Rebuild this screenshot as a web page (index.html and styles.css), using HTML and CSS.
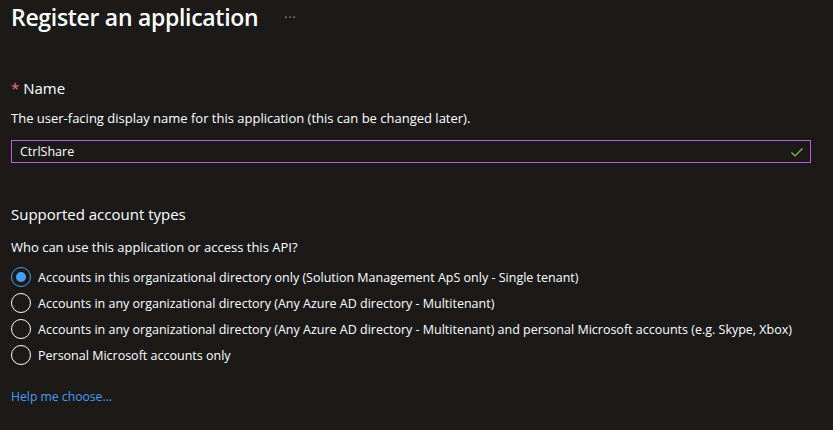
FILE: index.html
```html
<!DOCTYPE html>
<html lang="en">
<head>
    <meta charset="UTF-8">
    <meta name="viewport" content="width=device-width, initial-scale=1.0">
    <title>Register an application</title>
    <link rel="stylesheet" href="styles.css">
</head>
<body>

<div class="page">

    <div class="header">
        <h1 class="titulo">Register an application</h1>
        <span class="more">&middot;&middot;&middot;</span>
    </div>

    <!-- Nombre de la app -->
    <div class="section name-section">
        <div class="label"><span class="req">*</span> Name</div>
        <div class="desc">The user-facing display name for this application (this can be changed later).</div>
        <div class="input">
            <span>CtrlShare</span>
            <svg class="check" width="14" height="14" viewBox="0 0 14 14">
                <path d="M1.5 7.5 L5 11 L12.5 3.5" fill="none" stroke="#8dc149" stroke-width="1.2"/>
            </svg>
        </div>
    </div>

    <!-- Tipos de cuenta -->
    <div class="section">
        <div class="subtitle">Supported account types</div>
        <div class="desc">Who can use this application or access this API?</div>
        <div class="options">
            <label class="option checked"><span class="radio"></span>Accounts in this organizational directory only (Solution Management ApS only - Single tenant)</label>
            <label class="option"><span class="radio"></span>Accounts in any organizational directory (Any Azure AD directory - Multitenant)</label>
            <label class="option"><span class="radio"></span>Accounts in any organizational directory (Any Azure AD directory - Multitenant) and personal Microsoft accounts (e.g. Skype, Xbox)</label>
            <label class="option"><span class="radio"></span>Personal Microsoft accounts only</label>
        </div>
        <a class="link" href="#">Help me choose...</a>
    </div>

</div>

</body>
</html>
```

FILE: styles.css
```css
body {
    margin: 0;
    padding: 0;
    background-color: #1b1a19;
    color: #ffffff;
    font-family: "Open Sans", "Noto Sans", sans-serif;
    overflow: hidden;
}

.page {
    padding: 0 22px 0 11px;
}

.header {
    display: flex;
    align-items: center;
    height: 34px;
}

.titulo {
    margin: 0;
    font-size: 23px;
    font-weight: 600;
    letter-spacing: -0.3px;
    line-height: 34px;
}

.more {
    margin-left: 26px;
    font-size: 12px;
    color: #a19f9d;
    letter-spacing: 1px;
}

.section {
    display: flex;
    flex-direction: column;
}

.name-section {
    margin-top: 43px;
}

.label {
    font-size: 15px;
    line-height: 22px;
}

.req {
    color: #f1707b;
}

.desc {
    font-size: 13px;
    line-height: 18px;
    margin-top: 10px;
}

.input {
    margin-top: 13px;
    height: 21px;
    border: 1px solid #c25dd9;
    display: flex;
    align-items: center;
    justify-content: space-between;
    padding: 0 6px 0 8px;
    font-size: 12.5px;
}

.check {
    display: block;
}

.subtitle {
    margin-top: 40px;
    font-size: 15px;
    line-height: 22px;
}

.subtitle + .desc {
    margin-top: 13px;
}

.options {
    display: flex;
    flex-direction: column;
    margin-top: 8px;
}

.option {
    display: flex;
    align-items: center;
    height: 26px;
    font-size: 12.5px;
}

.radio {
    width: 20px;
    height: 20px;
    border: 1px solid #ffffff;
    border-radius: 50%;
    margin-right: 7px;
    box-sizing: border-box;
    position: relative;
    flex-shrink: 0;
}

.option.checked .radio {
    border-color: #479ef5;
}

.option.checked .radio::after {
    content: "";
    position: absolute;
    top: 4px;
    left: 4px;
    width: 10px;
    height: 10px;
    border-radius: 50%;
    background-color: #479ef5;
}

.link {
    margin-top: 20px;
    font-size: 12.2px;
    color: #479ef5;
    text-decoration: none;
    align-self: flex-start;
}
```
